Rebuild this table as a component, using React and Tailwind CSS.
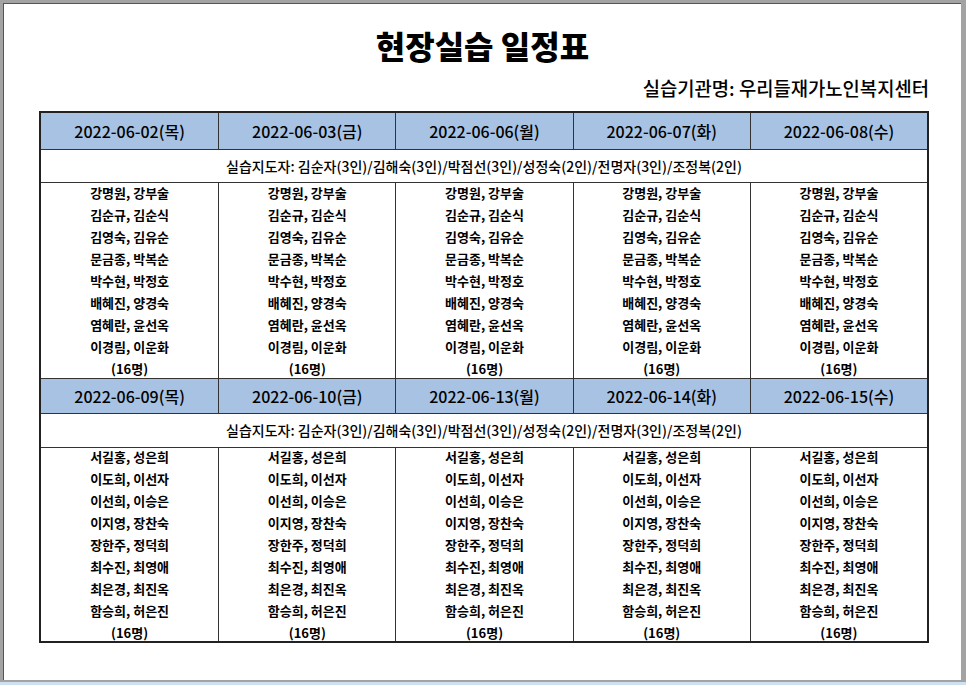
import React from 'react'

const font = { fontFamily: '"Noto Sans CJK KR", "Noto Sans", sans-serif' }

const weeks = [
  {
    dates: ['2022-06-02(목)', '2022-06-03(금)', '2022-06-06(월)', '2022-06-07(화)', '2022-06-08(수)'],
    names: [
      '강명원, 강부술',
      '김순규, 김순식',
      '김영숙, 김유순',
      '문금종, 박복순',
      '박수현, 박정호',
      '배혜진, 양경숙',
      '염혜란, 윤선옥',
      '이경림, 이운화',
      '(16명)'
    ]
  },
  {
    dates: ['2022-06-09(목)', '2022-06-10(금)', '2022-06-13(월)', '2022-06-14(화)', '2022-06-15(수)'],
    names: [
      '서길홍, 성은희',
      '이도희, 이선자',
      '이선희, 이승은',
      '이지영, 장찬숙',
      '장한주, 정덕희',
      '최수진, 최영애',
      '최은경, 최진옥',
      '함승희, 허은진',
      '(16명)'
    ]
  }
]

const mentors = '실습지도자: 김순자(3인)/김해숙(3인)/박점선(3인)/성정숙(2인)/전명자(3인)/조정복(2인)'

function Week({ week, headH, mentorH, namesH, last }) {
  return (
    <div>
      <div className={`grid grid-cols-5 bg-[#a7c2e2] border-b border-[#333] ${headH}`}>
        {week.dates.map((d, i) => (
          <div key={d} className={`flex items-center justify-center text-[16px] font-medium ${i ? 'border-l border-[#333]' : ''}`}>
            {d}
          </div>
        ))}
      </div>
      <div className={`flex items-center justify-center border-b border-[#333] text-[14px] font-medium ${mentorH}`}>
        {mentors}
      </div>
      <div className={`grid grid-cols-5 grid-rows-1 ${last ? '' : 'border-b border-[#333]'} ${namesH}`}>
        {week.dates.map((d, i) => (
          <div key={d} className={`flex min-h-0 flex-col items-center justify-center text-[13px] font-semibold leading-[22px] ${i ? 'border-l border-[#333]' : ''}`}>
            {week.names.map(n => (
              <div key={n} className="shrink-0">{n}</div>
            ))}
          </div>
        ))}
      </div>
    </div>
  )
}

export default function App() {
  return (
    <div className="flex h-[685px] w-[966px] flex-col bg-[#a3a3a3]" style={font}>
      <div className="flex-1 pl-[3px] pt-[3px] pr-[5px] pb-[2px]">
        <div className="h-full border-l border-t border-[#555] bg-white text-black">
          <div className="pt-[23px] text-center text-[32px] font-black leading-[36px]">현장실습 일정표</div>
          <div className="mt-[13px] pr-[32px] text-right text-[18.8px] font-medium leading-[24px]">실습기관명: 우리들재가노인복지센터</div>
          <div className="ml-[35px] mt-[11px] w-[890px] border-2 border-[#222]">
            <Week week={weeks[0]} headH="h-[37px]" mentorH="h-[33px]" namesH="h-[196px]" />
            <Week week={weeks[1]} headH="h-[35px]" mentorH="h-[34px]" namesH="h-[193px]" last />
          </div>
        </div>
      </div>
      <div className="h-[3px] bg-[#cfe0ee]" />
    </div>
  )
}
